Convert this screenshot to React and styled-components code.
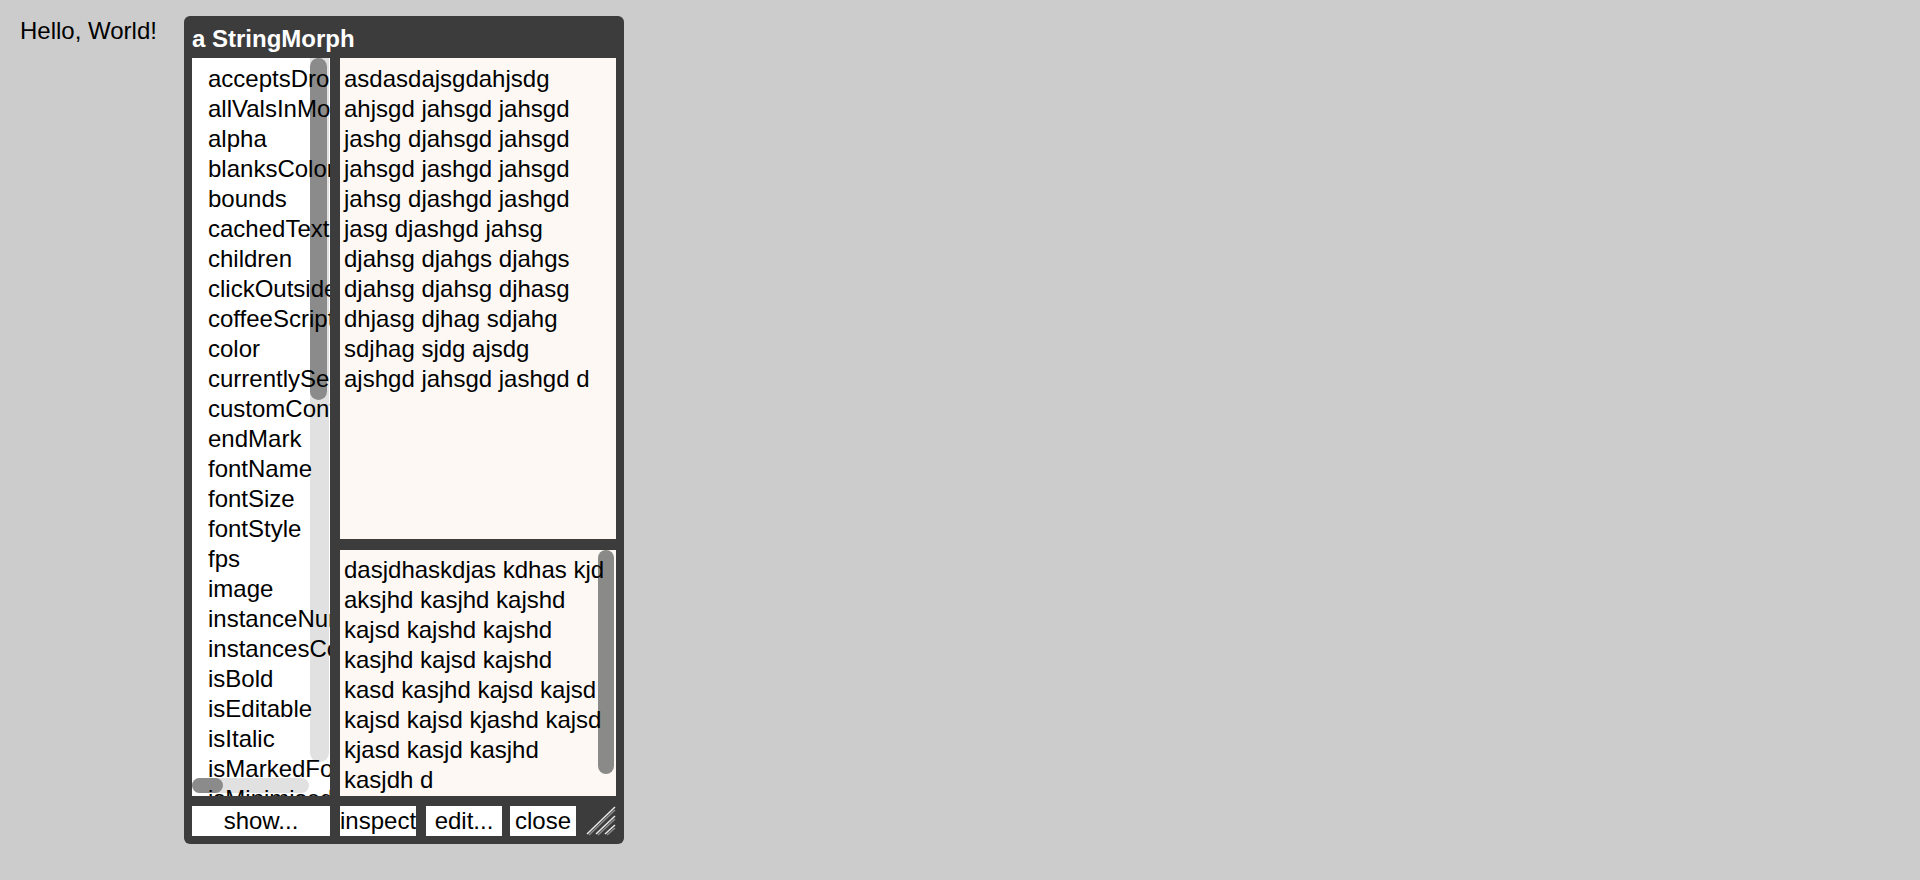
import React from "react";
import styled, { createGlobalStyle } from "styled-components";

const GlobalStyle = createGlobalStyle`
  html, body {
    margin: 0;
    padding: 0;
    background: #cccccc;
  }
  body {
    font-family: "Liberation Sans", Arial, sans-serif;
    color: #000;
  }
`;

const Page = styled.div`
  display: flex;
  align-items: flex-start;
  padding: 16px 0 0 20px;
  min-height: 880px;
  box-sizing: border-box;
  background: #cccccc;
`;

const Greeting = styled.div`
  width: 164px;
  font-size: 24px;
  line-height: 30px;
  color: #000;
`;

const Window = styled.div`
  width: 440px;
  height: 828px;
  box-sizing: border-box;
  background: #3c3c3c;
  border-radius: 6px;
  padding: 0 8px 8px;
  display: flex;
  flex-direction: column;
`;

const TitleBar = styled.div`
  height: 42px;
  box-sizing: border-box;
  padding-top: 8px;
  font-weight: bold;
  font-size: 24px;
  line-height: 30px;
  color: #fff;
  white-space: nowrap;
`;

const Body = styled.div`
  display: grid;
  grid-template-columns: 138px 276px;
  column-gap: 10px;
  height: 738px;
`;

const ListPane = styled.div`
  position: relative;
  background: #fff;
  overflow: hidden;
  box-sizing: border-box;
  padding: 6px 0 0 16px;
`;

const ListItem = styled.div`
  position: relative;
  z-index: 1;
  font-size: 24px;
  line-height: 30px;
  white-space: nowrap;
`;

const VTrack = styled.div`
  position: absolute;
  z-index: 0;
  left: 118px;
  top: 0;
  width: 19px;
  height: 704px;
  background: #e1e1e1;
  border-radius: 0 0 9px 9px;
`;

const VThumb = styled.div`
  position: absolute;
  left: 0;
  top: 0;
  width: 17px;
  height: 342px;
  background: #8b8b8b;
  border-radius: 9px;
`;

const HTrack = styled.div`
  position: absolute;
  z-index: 0;
  left: 0;
  top: 720px;
  width: 117px;
  height: 15px;
  background: #e1e1e1;
  border-radius: 8px;
`;

const HThumb = styled.div`
  position: absolute;
  left: 0;
  top: 0;
  width: 31px;
  height: 15px;
  background: #8b8b8b;
  border-radius: 8px;
`;

const RightColumn = styled.div`
  display: grid;
  grid-template-rows: 481px 246px;
  row-gap: 11px;
`;

const TextPane = styled.div`
  position: relative;
  background: #fdf8f4;
  overflow: hidden;
  box-sizing: border-box;
  padding: ${(p) => p.$top}px 0 0 4px;
  font-size: 24px;
  line-height: 30px;
  white-space: pre;
`;

const PaneText = styled.div`
  position: relative;
  z-index: 1;
`;

const PaneThumb = styled.div`
  position: absolute;
  z-index: 0;
  right: 2px;
  top: 0;
  width: 16px;
  height: 224px;
  background: #8a8a88;
  border-radius: 8px;
`;

const ButtonRow = styled.div`
  display: flex;
  margin-top: 10px;
  height: 30px;
`;

const Button = styled.div`
  width: ${(p) => p.$w}px;
  margin-right: ${(p) => p.$gap}px;
  flex: none;
  background: #fff;
  font-size: 24px;
  line-height: 30px;
  text-align: center;
  overflow: hidden;
  white-space: nowrap;
`;

const Handle = styled.div`
  width: 30px;
  height: 30px;
  flex: none;
  display: flex;
`;

const listItems = [
  "acceptsDrops",
  "allValsInMorphs",
  "alpha",
  "blanksColor",
  "bounds",
  "cachedTextImage",
  "children",
  "clickOutsideToClose",
  "coffeeScriptSource",
  "color",
  "currentlySelected",
  "customContextMenu",
  "endMark",
  "fontName",
  "fontSize",
  "fontStyle",
  "fps",
  "image",
  "instanceNumber",
  "instancesCounter",
  "isBold",
  "isEditable",
  "isItalic",
  "isMarkedForDestruction",
  "isMinimised",
];

const upperText = [
  "asdasdajsgdahjsdg",
  "ahjsgd jahsgd jahsgd",
  "jashg djahsgd jahsgd",
  "jahsgd jashgd jahsgd",
  "jahsg djashgd jashgd",
  "jasg djashgd jahsg",
  "djahsg djahgs djahgs",
  "djahsg djahsg djhasg",
  "dhjasg djhag sdjahg",
  "sdjhag sjdg ajsdg",
  "ajshgd jahsgd jashgd d",
].join("\n");

const lowerText = [
  "dasjdhaskdjas kdhas kjd",
  "aksjhd kasjhd kajshd",
  "kajsd kajshd kajshd",
  "kasjhd kajsd kajshd",
  "kasd kasjhd kajsd kajsd",
  "kajsd kajsd kjashd kajsd",
  "kjasd kasjd kasjhd",
  "kasjdh d",
].join("\n");

function ResizeIcon() {
  return (
    <svg width="30" height="30" viewBox="0 0 30 30">
      <g strokeWidth="1.5" fill="none">
        <line x1="1" y1="28" x2="29" y2="1" stroke="#e8e8e8" />
        <line x1="3" y1="29" x2="29" y2="4" stroke="#8c8c8c" />
        <line x1="10" y1="28" x2="29" y2="10" stroke="#e8e8e8" />
        <line x1="12" y1="29" x2="29" y2="13" stroke="#8c8c8c" />
        <line x1="19" y1="28" x2="29" y2="19" stroke="#e8e8e8" />
        <line x1="21" y1="29" x2="29" y2="22" stroke="#8c8c8c" />
      </g>
    </svg>
  );
}

export default function App() {
  return (
    <>
      <GlobalStyle />
      <Page>
        <Greeting>Hello, World!</Greeting>
        <Window>
          <TitleBar>a StringMorph</TitleBar>
          <Body>
            <ListPane>
              <VTrack>
                <VThumb />
              </VTrack>
              <HTrack>
                <HThumb />
              </HTrack>
              {listItems.map((item) => (
                <ListItem key={item}>{item}</ListItem>
              ))}
            </ListPane>
            <RightColumn>
              <TextPane $top={6}>
                <PaneText>{upperText}</PaneText>
              </TextPane>
              <TextPane $top={5}>
                <PaneThumb />
                <PaneText>{lowerText}</PaneText>
              </TextPane>
            </RightColumn>
          </Body>
          <ButtonRow>
            <Button $w={138} $gap={10}>show...</Button>
            <Button $w={76} $gap={10}>inspect</Button>
            <Button $w={76} $gap={8}>edit...</Button>
            <Button $w={66} $gap={10}>close</Button>
            <Handle>
              <ResizeIcon />
            </Handle>
          </ButtonRow>
        </Window>
      </Page>
    </>
  );
}
